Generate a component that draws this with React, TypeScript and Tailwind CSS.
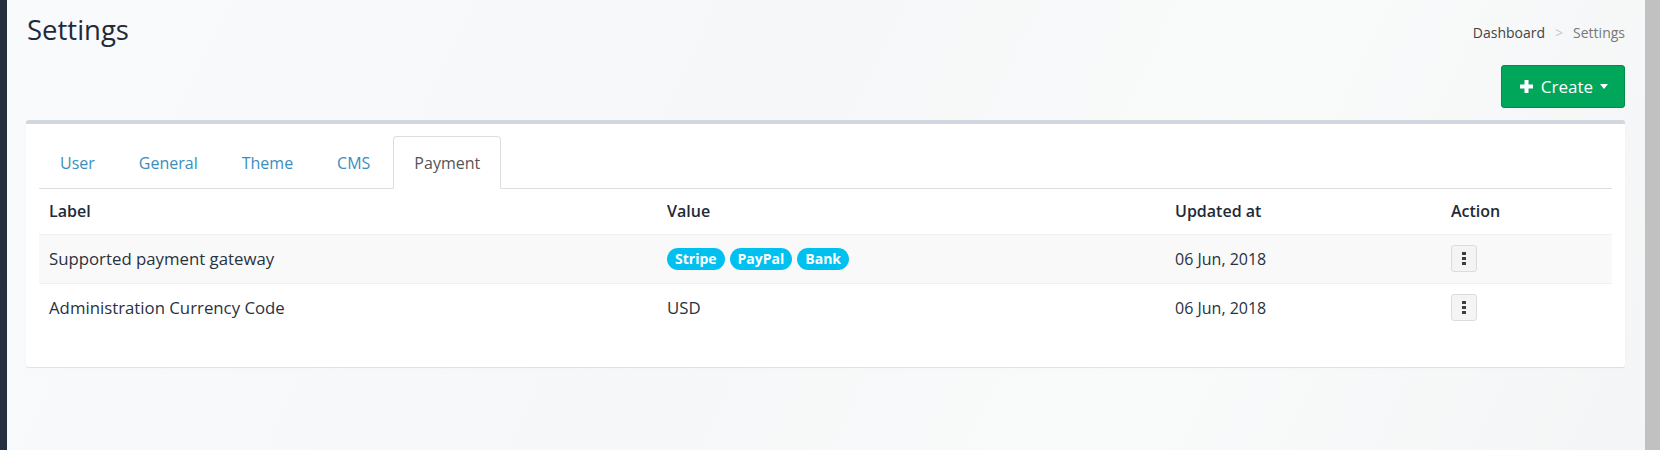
const tabs = ['User', 'General', 'Theme', 'CMS', 'Payment']

type Row = {
  label: string
  value: string | string[]
  updated: string
}

const rows: Row[] = [
  { label: 'Supported payment gateway', value: ['Stripe', 'PayPal', 'Bank'], updated: '06 Jun, 2018' },
  { label: 'Administration Currency Code', value: 'USD', updated: '06 Jun, 2018' },
]

function DotsButton() {
  return (
    <button className="flex h-[27px] w-[26px] flex-col items-center justify-center gap-[2px] rounded-[3px] border border-[#dcdcdc] bg-[#f4f4f4]">
      <span className="h-[3px] w-[4px] bg-[#3d3d44]" />
      <span className="h-[3px] w-[4px] bg-[#3d3d44]" />
      <span className="h-[3px] w-[4px] bg-[#3d3d44]" />
    </button>
  )
}

function Badge({ children }: { children: string }) {
  return (
    <span className="inline-flex h-[22px] items-center rounded-full bg-[#00c0ef] px-[8px] text-[14px] font-bold text-white">
      {children}
    </span>
  )
}

export default function App() {
  return (
    <div
      className="flex h-screen bg-[#f8f9fa] text-[#28323f]"
      style={{ fontFamily: '"Open Sans", "Noto Sans", sans-serif' }}
    >
      <aside className="w-[7px] shrink-0 bg-[#252f3e]" />

      <main className="flex-1 bg-[linear-gradient(115deg,#f9fafb_0%,#f6f7f8_45%,#f9fafa_70%,#f4f5f6_100%)] pl-[19px] pr-[20px]">
        <div className="flex h-[60px] items-center justify-between">
          <h1 className="pl-[1px] text-[27.5px] leading-none text-[#1f2b3a]">Settings</h1>
          <div className="mt-[4px] flex items-center text-[14px]">
            <span className="text-[#444]">Dashboard</span>
            <span className="mx-[10px] text-[#c8c8c8]">&gt;</span>
            <span className="text-[#777]">Settings</span>
          </div>
        </div>

        <div className="mt-[5px] flex justify-end">
          <button className="flex h-[43px] w-[124px] items-center justify-center gap-[7px] rounded-[3px] border border-[#008d4c] bg-[#00a65a] pl-[1px] text-[17px] text-white">
            <svg width="15" height="15" viewBox="0 0 15 15">
              <path d="M7.5 1v13M1 7.5h13" stroke="white" strokeWidth="4" />
            </svg>
            <span>Create</span>
            <span className="h-0 w-0 border-x-[4.5px] border-t-[5px] border-x-transparent border-t-white" />
          </button>
        </div>

        <section className="mt-[12px] rounded-[3px] border-t-4 border-[#d2d6de] bg-white px-[13px] pt-[12px] pb-[35px] shadow-[0_1px_1px_rgba(0,0,0,0.1)]">
          <div className="flex border-b border-[#ddd]">
            {tabs.map((tab) => {
              const active = tab === 'Payment'
              return (
                <div
                  key={tab}
                  className={`-mb-px mr-[2px] flex h-[53px] items-center rounded-t-[4px] border px-[20px] text-[16px] ${
                    active
                      ? 'border-[#ddd] border-b-white bg-white text-[#555]'
                      : 'border-transparent text-[#3c8dbc]'
                  }`}
                >
                  {tab}
                </div>
              )
            })}
          </div>

          <table className="w-full table-fixed border-collapse text-[16.8px]">
            <colgroup>
              <col className="w-[618px]" />
              <col className="w-[508px]" />
              <col className="w-[276px]" />
              <col />
            </colgroup>
            <thead>
              <tr className="h-[45px] text-left text-[16px] text-[#1f2a37]">
                <th className="px-[10px] font-semibold">Label</th>
                <th className="px-[10px] font-semibold">Value</th>
                <th className="px-[10px] font-semibold">Updated at</th>
                <th className="px-[10px] font-semibold">Action</th>
              </tr>
            </thead>
            <tbody>
              {rows.map((row, i) => (
                <tr
                  key={row.label}
                  className={`h-[49px] border-t border-[#f0f0f0] ${i === 0 ? 'bg-[#f9f9f9]' : ''}`}
                >
                  <td className="px-[10px]">{row.label}</td>
                  <td className="px-[10px]">
                    {Array.isArray(row.value) ? (
                      <div className="flex gap-[5px]">
                        {row.value.map((v) => (
                          <Badge key={v}>{v}</Badge>
                        ))}
                      </div>
                    ) : (
                      row.value
                    )}
                  </td>
                  <td className="px-[10px] text-[16px]">{row.updated}</td>
                  <td className="px-[10px]">
                    <DotsButton />
                  </td>
                </tr>
              ))}
            </tbody>
          </table>
        </section>
      </main>

      <div className="w-[15px] shrink-0 bg-[#c1c1c1]" />
    </div>
  )
}
